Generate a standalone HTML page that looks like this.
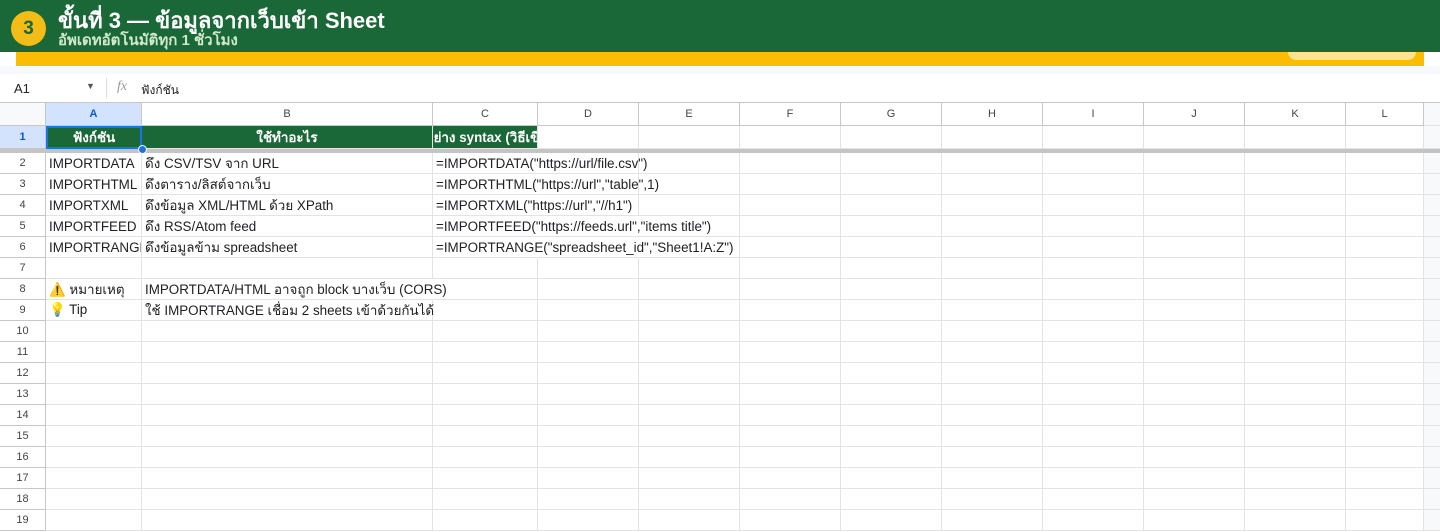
<!DOCTYPE html>
<html><head><meta charset="utf-8"><style>
*{box-sizing:border-box;margin:0;padding:0}
body{width:1440px;height:532px;overflow:hidden;background:#fff;font-family:"Liberation Sans",Arial,sans-serif;position:relative}
.hdr{position:absolute;left:0;top:0;width:1440px;height:52px;background:#1a6738;z-index:3}
.badge{position:absolute;left:11px;top:11px;width:35px;height:35px;border-radius:50%;background:#f3bc17;color:#1a6738;font-size:19px;font-weight:bold;text-align:center;line-height:36px}
.t1{position:absolute;left:58px;top:8px;color:#fff;font-size:22px;font-weight:bold;line-height:26px}
.t2{position:absolute;left:58px;top:32px;color:#cfe9c9;font-size:15px;line-height:18px;font-weight:bold}
.yb{position:absolute;left:16px;top:52px;width:1408px;height:14px;background:#fbbc04}
.pill{position:absolute;left:1288px;top:52px;width:128px;height:8px;background:#fde293;border-radius:0 0 8px 8px}
.strip{position:absolute;left:0;top:66px;width:1440px;height:8px;background:#f8f9fc}
.fb{position:absolute;left:0;top:76px;width:1440px;height:26px;font-size:13px;color:#222}
.row{position:absolute;left:0;display:flex;width:1440px;height:21px}
.c{height:100%;border-right:1px solid #e2e3e3;border-bottom:1px solid #e2e3e3;font-size:13.4px;color:#202124;white-space:nowrap;overflow:visible;padding-left:3px;display:flex;align-items:center;flex:none}
.rh{width:46px;justify-content:center;padding:0;font-size:11px;color:#444;background:#fff;border-right:1px solid #c7c7c7;border-bottom:1px solid #c7c7c7}
.ch{justify-content:center;padding:0;font-size:11px;color:#444;background:#fff;border-right:1px solid #c7c7c7;border-bottom:1px solid #c7c7c7}
.g{background:#1a6738;color:#fff;font-weight:bold;justify-content:center;padding:0;overflow:hidden;font-size:13.4px}
.gutter{width:16px;background:#f8f9fa;height:100%;flex:none;border-bottom:1px solid #e2e3e3}
.a{width:96px;overflow:hidden}.b{width:291px;position:relative;z-index:1}.cc{width:105px;position:relative;z-index:1}
.d{width:101px}.l{width:78px}.nb{border-right-color:transparent}
</style></head><body>
<div class="hdr"><div class="badge">3</div><div class="t1">ขั้นที่ 3 — ข้อมูลจากเว็บเข้า Sheet</div><div class="t2">อัพเดทอัตโนมัติทุก 1 ชั่วโมง</div></div>
<div class="yb"></div><div class="pill"></div>
<div class="strip"></div>
<div class="fb"><span style="position:absolute;left:14px;top:5px">A1</span><span style="position:absolute;left:86px;top:5px;font-size:9px;color:#555">▼</span><span style="position:absolute;left:106px;top:2px;width:1px;height:20px;background:#ddd"></span><span style="position:absolute;left:117px;top:3px;font-style:italic;color:#999;font-family:'Liberation Serif',serif;font-size:14px">fx</span><span style="position:absolute;left:141px;top:5px;font-size:12px">ฟังก์ชัน</span></div>
<div class="row" style="top:102px;height:24px;border-top:1px solid #c7c7c7">
<div class="c rh" style="background:#f8f9fa"></div><div class="c ch" style="width:96px;background:#d3e3fd;color:#0b57d0;font-weight:bold">A</div><div class="c ch" style="width:291px">B</div><div class="c ch" style="width:105px">C</div><div class="c ch d">D</div><div class="c ch d">E</div><div class="c ch d">F</div><div class="c ch d">G</div><div class="c ch d">H</div><div class="c ch d">I</div><div class="c ch d">J</div><div class="c ch d">K</div><div class="c ch l">L</div><div class="gutter"></div></div>
<div class="row" style="top:126px;height:23px">
<div class="c rh" style="background:#d3e3fd;color:#0b57d0;font-weight:bold">1</div><div class="c g" style="width:96px;border:2px solid #1a73e8">ฟังก์ชัน</div><div class="c g" style="width:291px">ใช้ทำอะไร</div><div class="c g" style="width:105px"><span>ตัวอย่าง syntax (วิธีเขียน)</span></div><div class="c d"></div><div class="c d"></div><div class="c d"></div><div class="c d"></div><div class="c d"></div><div class="c d"></div><div class="c d"></div><div class="c d"></div><div class="c l"></div><div class="gutter"></div></div>
<div style="position:absolute;left:0;top:149px;width:1440px;height:4px;background:#c4c4c4"></div>
<div style="position:absolute;left:138px;top:145px;width:9px;height:9px;border-radius:50%;background:#1a73e8;border:1px solid #fff;z-index:2"></div>

<div class="row" style="top:153px"><div class="c rh">2</div><div class="c a">IMPORTDATA</div><div class="c b">ดึง CSV/TSV จาก URL</div><div class="c cc nb">=IMPORTDATA("https://url/file.csv")</div><div class="c d"></div><div class="c d"></div><div class="c d"></div><div class="c d"></div><div class="c d"></div><div class="c d"></div><div class="c d"></div><div class="c d"></div><div class="c l"></div><div class="gutter"></div></div>
<div class="row" style="top:174px"><div class="c rh">3</div><div class="c a">IMPORTHTML</div><div class="c b">ดึงตาราง/ลิสต์จากเว็บ</div><div class="c cc nb">=IMPORTHTML("https://url","table",1)</div><div class="c d"></div><div class="c d"></div><div class="c d"></div><div class="c d"></div><div class="c d"></div><div class="c d"></div><div class="c d"></div><div class="c d"></div><div class="c l"></div><div class="gutter"></div></div>
<div class="row" style="top:195px"><div class="c rh">4</div><div class="c a">IMPORTXML</div><div class="c b">ดึงข้อมูล XML/HTML ด้วย XPath</div><div class="c cc nb">=IMPORTXML("https://url","//h1")</div><div class="c d"></div><div class="c d"></div><div class="c d"></div><div class="c d"></div><div class="c d"></div><div class="c d"></div><div class="c d"></div><div class="c d"></div><div class="c l"></div><div class="gutter"></div></div>
<div class="row" style="top:216px"><div class="c rh">5</div><div class="c a">IMPORTFEED</div><div class="c b">ดึง RSS/Atom feed</div><div class="c cc nb">=IMPORTFEED("https://feeds.url","items title")</div><div class="c d nb"></div><div class="c d"></div><div class="c d"></div><div class="c d"></div><div class="c d"></div><div class="c d"></div><div class="c d"></div><div class="c d"></div><div class="c l"></div><div class="gutter"></div></div>
<div class="row" style="top:237px"><div class="c rh">6</div><div class="c a">IMPORTRANGE</div><div class="c b">ดึงข้อมูลข้าม spreadsheet</div><div class="c cc nb">=IMPORTRANGE("spreadsheet_id","Sheet1!A:Z")</div><div class="c d nb"></div><div class="c d"></div><div class="c d"></div><div class="c d"></div><div class="c d"></div><div class="c d"></div><div class="c d"></div><div class="c d"></div><div class="c l"></div><div class="gutter"></div></div>
<div class="row" style="top:258px"><div class="c rh">7</div><div class="c a"></div><div class="c b"></div><div class="c cc"></div><div class="c d"></div><div class="c d"></div><div class="c d"></div><div class="c d"></div><div class="c d"></div><div class="c d"></div><div class="c d"></div><div class="c d"></div><div class="c l"></div><div class="gutter"></div></div>
<div class="row" style="top:279px"><div class="c rh">8</div><div class="c a">⚠️ หมายเหตุ</div><div class="c b nb">IMPORTDATA/HTML อาจถูก block บางเว็บ (CORS)</div><div class="c cc"></div><div class="c d"></div><div class="c d"></div><div class="c d"></div><div class="c d"></div><div class="c d"></div><div class="c d"></div><div class="c d"></div><div class="c d"></div><div class="c l"></div><div class="gutter"></div></div>
<div class="row" style="top:300px"><div class="c rh">9</div><div class="c a">💡 Tip</div><div class="c b">ใช้ IMPORTRANGE เชื่อม 2 sheets เข้าด้วยกันได้</div><div class="c cc"></div><div class="c d"></div><div class="c d"></div><div class="c d"></div><div class="c d"></div><div class="c d"></div><div class="c d"></div><div class="c d"></div><div class="c d"></div><div class="c l"></div><div class="gutter"></div></div>
<div class="row" style="top:321px"><div class="c rh">10</div><div class="c a"></div><div class="c b"></div><div class="c cc"></div><div class="c d"></div><div class="c d"></div><div class="c d"></div><div class="c d"></div><div class="c d"></div><div class="c d"></div><div class="c d"></div><div class="c d"></div><div class="c l"></div><div class="gutter"></div></div>
<div class="row" style="top:342px"><div class="c rh">11</div><div class="c a"></div><div class="c b"></div><div class="c cc"></div><div class="c d"></div><div class="c d"></div><div class="c d"></div><div class="c d"></div><div class="c d"></div><div class="c d"></div><div class="c d"></div><div class="c d"></div><div class="c l"></div><div class="gutter"></div></div>
<div class="row" style="top:363px"><div class="c rh">12</div><div class="c a"></div><div class="c b"></div><div class="c cc"></div><div class="c d"></div><div class="c d"></div><div class="c d"></div><div class="c d"></div><div class="c d"></div><div class="c d"></div><div class="c d"></div><div class="c d"></div><div class="c l"></div><div class="gutter"></div></div>
<div class="row" style="top:384px"><div class="c rh">13</div><div class="c a"></div><div class="c b"></div><div class="c cc"></div><div class="c d"></div><div class="c d"></div><div class="c d"></div><div class="c d"></div><div class="c d"></div><div class="c d"></div><div class="c d"></div><div class="c d"></div><div class="c l"></div><div class="gutter"></div></div>
<div class="row" style="top:405px"><div class="c rh">14</div><div class="c a"></div><div class="c b"></div><div class="c cc"></div><div class="c d"></div><div class="c d"></div><div class="c d"></div><div class="c d"></div><div class="c d"></div><div class="c d"></div><div class="c d"></div><div class="c d"></div><div class="c l"></div><div class="gutter"></div></div>
<div class="row" style="top:426px"><div class="c rh">15</div><div class="c a"></div><div class="c b"></div><div class="c cc"></div><div class="c d"></div><div class="c d"></div><div class="c d"></div><div class="c d"></div><div class="c d"></div><div class="c d"></div><div class="c d"></div><div class="c d"></div><div class="c l"></div><div class="gutter"></div></div>
<div class="row" style="top:447px"><div class="c rh">16</div><div class="c a"></div><div class="c b"></div><div class="c cc"></div><div class="c d"></div><div class="c d"></div><div class="c d"></div><div class="c d"></div><div class="c d"></div><div class="c d"></div><div class="c d"></div><div class="c d"></div><div class="c l"></div><div class="gutter"></div></div>
<div class="row" style="top:468px"><div class="c rh">17</div><div class="c a"></div><div class="c b"></div><div class="c cc"></div><div class="c d"></div><div class="c d"></div><div class="c d"></div><div class="c d"></div><div class="c d"></div><div class="c d"></div><div class="c d"></div><div class="c d"></div><div class="c l"></div><div class="gutter"></div></div>
<div class="row" style="top:489px"><div class="c rh">18</div><div class="c a"></div><div class="c b"></div><div class="c cc"></div><div class="c d"></div><div class="c d"></div><div class="c d"></div><div class="c d"></div><div class="c d"></div><div class="c d"></div><div class="c d"></div><div class="c d"></div><div class="c l"></div><div class="gutter"></div></div>
<div class="row" style="top:510px"><div class="c rh">19</div><div class="c a"></div><div class="c b"></div><div class="c cc"></div><div class="c d"></div><div class="c d"></div><div class="c d"></div><div class="c d"></div><div class="c d"></div><div class="c d"></div><div class="c d"></div><div class="c d"></div><div class="c l"></div><div class="gutter"></div></div>
</body></html>
